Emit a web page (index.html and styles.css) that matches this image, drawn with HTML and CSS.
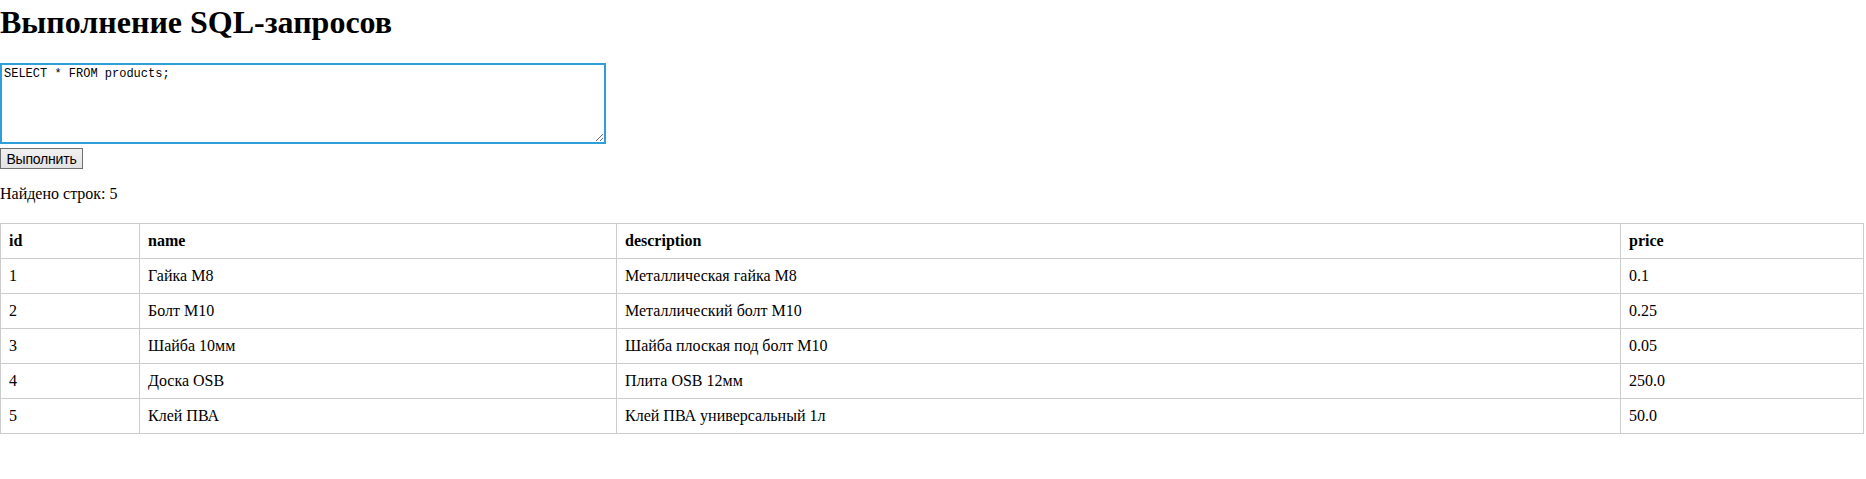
FILE: index.html
```html
<!DOCTYPE html>
<html lang="ru">
<head>
<meta charset="utf-8">
<title>Выполнение SQL-запросов</title>
<link rel="stylesheet" href="styles.css">
</head>
<body>
<h1 class="title">Выполнение SQL-запросов</h1>
<form class="query-form">
<textarea class="query-input">SELECT * FROM products;</textarea>
<button type="button" class="run-btn">Выполнить</button>
</form>
<p class="count">Найдено строк: 5</p>
<table class="results">
<colgroup>
<col class="c-id">
<col class="c-name">
<col class="c-desc">
<col class="c-price">
</colgroup>
<thead>
<tr><th>id</th><th>name</th><th>description</th><th>price</th></tr>
</thead>
<tbody>
<tr><td>1</td><td>Гайка M8</td><td>Металлическая гайка M8</td><td>0.1</td></tr>
<tr><td>2</td><td>Болт M10</td><td>Металлический болт M10</td><td>0.25</td></tr>
<tr><td>3</td><td>Шайба 10мм</td><td>Шайба плоская под болт M10</td><td>0.05</td></tr>
<tr><td>4</td><td>Доска OSB</td><td>Плита OSB 12мм</td><td>250.0</td></tr>
<tr><td>5</td><td>Клей ПВА</td><td>Клей ПВА универсальный 1л</td><td>50.0</td></tr>
</tbody>
</table>
</body>
</html>
```
FILE: styles.css
```css
html, body {
  margin: 0;
  padding: 0;
  background: #ffffff;
}

body {
  font-family: "Liberation Serif", "Times New Roman", serif;
  font-size: 16px;
  color: #000000;
}

.title {
  font-size: 32px;
  font-weight: bold;
  margin: 4px 0 22px;
}

.query-form {
  display: flex;
  flex-direction: column;
  align-items: flex-start;
  gap: 4px;
}

.query-input {
  box-sizing: border-box;
  width: 606px;
  height: 81px;
  margin: 0;
  padding: 2px 2px;
  border: 2px solid #2f9fd9;
  outline: none;
  font-family: "Liberation Mono", "DejaVu Sans Mono", monospace;
  font-size: 12px;
  line-height: 14px;
  color: #000;
  background: #fff;
}

.run-btn {
  box-sizing: border-box;
  height: 21px;
  width: 83px;
  margin: 0;
  padding: 0 3px;
  font-family: "Liberation Sans", Arial, sans-serif;
  font-size: 14px;
  letter-spacing: -0.2px;
  color: #000;
  background: linear-gradient(#f0f0f0, #e3e3e3);
  border: 1px solid #707070;
  border-radius: 0;
}

.count {
  margin: 16px 0 20px;
}

.results {
  border-collapse: collapse;
  table-layout: fixed;
  width: 1863px;
}

.c-id { width: 139px; }
.c-name { width: 477px; }
.c-desc { width: 1004px; }
.c-price { width: 243px; }

.results th,
.results td {
  border: 1px solid #cccccc;
  padding: 8px;
  text-align: left;
  vertical-align: middle;
  height: 18px;
  line-height: 18px;
}

.results th {
  font-weight: bold;
}
```
